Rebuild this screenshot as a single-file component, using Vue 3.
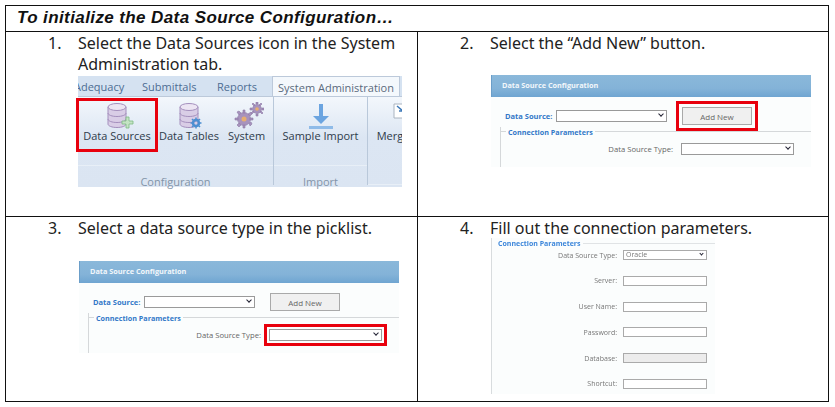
<template>
  <div class="sheet">
    <div class="title">To initialize the Data Source Configuration…</div>

    <section class="step">
      <div class="step-text"><span class="num">1.</span><span>Select the Data Sources icon in the System Administration tab.</span></div>
      <div class="ribbon">
        <div class="tabs">
          <span class="tab adequacy">Adequacy</span>
          <span class="tab submittals">Submittals</span>
          <span class="tab reports">Reports</span>
          <span class="tab active">System Administration</span>
        </div>
        <div class="ribbon-body">
          <div class="group config">
            <div class="tools">
              <div class="tool first">
                <svg width="34" height="28" viewBox="0 0 34 28">
                  <g fill="#d9cde6" stroke="#a48fbd" stroke-width="1">
                    <path d="M5 5v17c0 2 4 3.500 9 3.500s9-1.500 9-3.500V5z" />
                    <ellipse cx="14" cy="5" rx="9" ry="3.500" fill="#ece5f3" />
                    <path d="M5 11c0 2 4 3.500 9 3.500s9-1.500 9-3.500M5 17c0 2 4 3.500 9 3.500s9-1.500 9-3.500" fill="none" />
                  </g>
                  <path d="M23 15h3v4h4v3h-4v4h-3v-4h-4v-3h4z" fill="#c4e3c4" stroke="#7dba84" stroke-width=".8" />
                </svg>
                <span>Data Sources</span>
              </div>
              <div class="tool tables">
                <svg width="34" height="28" viewBox="0 0 34 28">
                  <g fill="#d9cde6" stroke="#a48fbd" stroke-width="1">
                    <path d="M5 5v17c0 2 4 3.500 9 3.500s9-1.500 9-3.500V5z" />
                    <ellipse cx="14" cy="5" rx="9" ry="3.500" fill="#ece5f3" />
                    <path d="M5 11c0 2 4 3.500 9 3.500s9-1.500 9-3.500M5 17c0 2 4 3.500 9 3.500s9-1.500 9-3.500" fill="none" />
                  </g>
                  <circle cx="21" cy="21" r="3" fill="none" stroke="#4d8fd1" stroke-width="2.500" />
                  <path d="M21 15.500v2.500M21 24v2.500M15.500 21H18M24 21h2.500M17 17l2 2M23 23l2 2M25 17l-2 2M19 23l-2 2" stroke="#4d8fd1" stroke-width="1.500" />
                </svg>
                <span>Data Tables</span>
              </div>
              <div class="tool system">
                <svg width="34" height="28" viewBox="0 0 34 28">
                  <g fill="#a793bd" stroke="#8d78a6" stroke-width=".6">
                    <circle cx="14" cy="17" r="6.500" />
                    <path d="M13 8h2v3h-2zM13 23h2v3h-2zM5 16h3v2H5zM20 16h3v2h-3zM7 10l2-1 2 2-2 2zM19 21l2-1 1 2-2 2zM21 10l1 2-2 2-2-2zM9 21l2 2-2 2-2-2z" />
                    <circle cx="27" cy="7" r="4.500" />
                    <path d="M26 0h2v2h-2zM26 12h2v2h-2zM20 6h2v2h-2zM32 6h2v2h-2zM22 2l1-1 2 2-1 1zM30 10l1-1 2 2-1 1zM31 1l1 1-2 2-1-1zM23 9l1 1-2 2-1-1z" />
                  </g>
                  <circle cx="14" cy="17" r="2.500" fill="#e6ae72" />
                  <circle cx="27" cy="7" r="1.800" fill="#e6ae72" />
                </svg>
                <span>System</span>
              </div>
            </div>
            <div class="group-label">Configuration</div>
          </div>
          <div class="group import">
            <div class="tools">
              <div class="tool">
                <svg width="34" height="28" viewBox="0 0 34 28">
                  <path d="M15 2h4v12h6l-8 8-8-8h6z" fill="#6ba4e0" />
                  <rect x="5" y="24" width="24" height="3" fill="#8fbbe8" />
                </svg>
                <span>Sample Import</span>
              </div>
            </div>
            <div class="group-label">Import</div>
          </div>
          <div class="group merge">
            <div class="tools">
              <div class="tool">
                <svg width="34" height="28" viewBox="0 0 34 28">
                  <path d="M8 2h18v14H8z" fill="#fff" stroke="#aab4c0" />
                  <path d="M11 4l6 5M17 5v4h-4" fill="none" stroke="#3c78b8" stroke-width="1.500" />
                </svg>
                <span>Merge</span>
              </div>
            </div>
          </div>
        </div>
      </div>
    </section>

    <section class="step">
      <div class="step-text"><span class="num">2.</span><span>Select the “Add New” button.</span></div>
      <div class="config-panel second">
        <div class="panel-head">Data Source Configuration</div>
        <div class="source-row">
          <label>Data Source:</label>
          <div class="fake-select source"><i class="chev"></i></div>
          <button class="add-btn marked">Add New</button>
        </div>
        <div class="params">
          <div class="params-legend"><span>Connection Parameters</span></div>
          <div class="type-row">
            <label>Data Source Type:</label>
            <div class="fake-select type"><i class="chev"></i></div>
          </div>
        </div>
      </div>
    </section>

    <section class="step">
      <div class="step-text"><span class="num">3.</span><span>Select a data source type in the picklist.</span></div>
      <div class="config-panel third">
        <div class="panel-head">Data Source Configuration</div>
        <div class="source-row">
          <label>Data Source:</label>
          <div class="fake-select source"><i class="chev"></i></div>
          <button class="add-btn">Add New</button>
        </div>
        <div class="params">
          <div class="params-legend"><span>Connection Parameters</span></div>
          <div class="type-row">
            <label>Data Source Type:</label>
            <div class="fake-select type marked"><i class="chev"></i></div>
          </div>
        </div>
      </div>
    </section>

    <section class="step">
      <div class="step-text"><span class="num">4.</span><span>Fill out the connection parameters.</span></div>
      <div class="conn-form">
        <div class="conn-legend"><span>Connection Parameters</span></div>
        <div class="conn-row first-row">
          <label>Data Source Type:</label>
          <div class="conn-select">Oracle<i class="chev small"></i></div>
        </div>
        <div v-for="field in fields" :key="field.label" class="conn-row">
          <label>{{ field.label }}:</label>
          <div class="conn-input" :class="{ disabled: field.disabled }"></div>
        </div>
      </div>
    </section>
  </div>
</template>

<script setup>
const fields = [
  { label: 'Server' },
  { label: 'User Name' },
  { label: 'Password' },
  { label: 'Database', disabled: true },
  { label: 'Shortcut' },
]
</script>

<style>
body {
  margin: 0;
  background: #fff;
}
</style>

<style scoped>
.sheet {
  box-sizing: border-box;
  width: 824px;
  height: 397px;
  margin: 5px 0 0 5px;
  display: grid;
  grid-template-columns: 412px 1fr;
  grid-template-rows: 26px 185px 1fr;
  border: 1px solid #111;
  font-family: "Open Sans", "Liberation Sans", sans-serif;
  color: #222;
}
.title {
  grid-column: 1 / 3;
  padding-left: 11px;
  border-bottom: 1px solid #111;
  font: italic 700 17px/24px "Liberation Sans", sans-serif;
  letter-spacing: .4px;
  color: #111;
}
.step {
  min-width: 0;
}
.step:nth-of-type(odd) {
  border-right: 1px solid #111;
}
.step:nth-of-type(1),
.step:nth-of-type(2) {
  border-bottom: 1px solid #111;
}
.step-text {
  display: flex;
  padding: 1px 10px 0 42px;
  font: 16px/21px "Noto Sans", sans-serif;
  color: #222;
}
.num {
  flex: 0 0 30px;
}

/* ribbon */
.ribbon {
  width: 324px;
  height: 111px;
  margin: 1px 0 0 72px;
  background: #dbe5f2;
  font-size: 11px;
}
.tabs {
  display: flex;
  height: 20px;
  line-height: 21px;
  overflow: hidden;
  border-bottom: 1px solid #bcc9da;
  color: #4d6d93;
  white-space: nowrap;
  background: #d5e2f1;
}
.tab.adequacy {
  width: 64px;
  text-indent: -4px;
}
.tab.submittals {
  width: 75px;
}
.tab.reports {
  width: 55px;
}
.tab.active {
  width: 126px;
  text-align: center;
  color: #5a6a7c;
  background: #f4f8fc;
  border: 1px solid #bcc9da;
  border-bottom: 0;
}
.ribbon-body {
  display: flex;
  height: 90px;
  background: linear-gradient(#f3f7fc, #dce6f3 45%, #dbe5f2);
}
.group {
  box-sizing: border-box;
  flex: 0 0 auto;
  display: flex;
  flex-direction: column;
  border-right: 1px solid #b9c8da;
  margin-bottom: 2px;
}
.group.config {
  width: 196px;
}
.group.import {
  width: 94px;
}
.group.merge {
  flex: 1 1 0;
  min-width: 0;
  overflow: hidden;
  border: 0;
}
.tools {
  flex: 1;
  display: flex;
  border-bottom: 1px solid #e8eff7;
}
.tool {
  display: flex;
  flex-direction: column;
  align-items: center;
  padding-top: 5px;
  color: #2f3b4a;
  white-space: nowrap;
  line-height: 16px;
}
.tool svg {
  display: block;
  height: 28px;
  margin-bottom: -2px;
}
.tool.first {
  box-sizing: border-box;
  flex: 0 0 82px;
  height: 54px;
  margin: 1px 0 0 -2px;
  border: 3px solid #e8000d;
  padding-top: 1px;
}
.tool.first svg,
.tool.tables svg {
  margin-left: 5px;
}
.tool.tables {
  margin-left: 2px;
  width: 58px;
}
.tool.system {
  margin-left: 10px;
}
.import .tool {
  width: 93px;
}
.merge .tool {
  margin-left: 8px;
}
.merge .tool svg {
  transform: translateX(10px);
}
.group-label {
  box-sizing: border-box;
  height: 19px;
  padding-top: 7px;
  line-height: 18px;
  text-align: center;
  color: #8294a8;
}

/* config panels */
.config-panel {
  width: 320px;
  height: 92px;
  background: #fbfdfd;
  overflow: hidden;
  font-size: 7.700px;
}
.config-panel.second {
  margin: 21px 0 0 73px;
}
.config-panel.third {
  margin: 22px 0 0 73px;
}
.panel-head {
  height: 22px;
  padding-left: 10px;
  font-weight: 700;
  font-size: 7.300px;
  line-height: 21px;
  color: #f2f7fb;
  background: linear-gradient(#8ab8da, #84b3d8 60%, #6fa5d1);
  border-left: 1px solid #6b9ec9;
}
.source-row {
  display: flex;
  align-items: center;
  height: 18px;
  margin-top: 10px;
  padding-left: 14px;
}
.source-row label {
  flex: 0 0 51px;
  font-weight: 700;
  font-size: 7.500px;
  white-space: nowrap;
  color: #3278c8;
}
.fake-select {
  box-sizing: border-box;
  position: relative;
  height: 12px;
  background: #fff;
  border: 1px solid #9a9a9a;
}
.fake-select.source {
  width: 111px;
}
.fake-select.type {
  width: 113px;
}
.chev {
  position: absolute;
  right: 3px;
  top: 1px;
  width: 3px;
  height: 3px;
  border: solid #223;
  border-width: 0 1.500px 1.500px 0;
  transform: rotate(45deg);
}
.add-btn {
  box-sizing: border-box;
  width: 70px;
  height: 18px;
  margin-left: 15px;
  padding: 0;
  border: 1px solid #a9a9a9;
  border-radius: 0;
  background: #f0f0f0;
  font: 8px "Open Sans", sans-serif;
  color: #666;
}
.marked {
  outline: 3px solid #e8000d;
}
.add-btn.marked {
  outline-offset: 3px;
}
.fake-select.marked {
  outline-offset: 2px;
}
.params {
  height: 40px;
  margin: 2px 0 0 9px;
  border-left: 1px solid #d5d8da;
}
.params-legend {
  display: flex;
  align-items: center;
  height: 9px;
  font-weight: 700;
  font-size: 7.200px;
  color: #3278c8;
}
.params-legend span {
  padding: 0 2px;
  margin-left: 5px;
}
.params-legend::before {
  content: "";
  width: 5px;
  margin-right: -5px;
  border-top: 1px solid #d5d8da;
}
.params-legend::after {
  content: "";
  flex: 1;
  border-top: 1px solid #d5d8da;
}
.type-row {
  display: flex;
  align-items: center;
  margin-top: 7px;
  height: 12px;
  color: #666;
}
.type-row label {
  width: 172px;
  text-align: right;
  margin-right: 8px;
}

/* step 4 form */
.conn-form {
  box-sizing: border-box;
  width: 224px;
  height: 156px;
  margin: -1px 0 0 73px;
  background: #fbfdfd;
  border-left: 1px solid #d8dcde;
  font-size: 7px;
  color: #777;
  filter: blur(.25px);
}
.conn-legend {
  display: flex;
  align-items: center;
  height: 10px;
  font-weight: 700;
  color: #3c86da;
}
.conn-legend span {
  padding: 0 2px;
  margin-left: 4px;
}
.conn-legend::after {
  content: "";
  flex: 1;
  border-top: 1px solid #e0e3e5;
}
.conn-row {
  display: flex;
  align-items: center;
  height: 10px;
  margin-top: 15.800px;
}
.conn-row.first-row {
  margin-top: 2px;
}
.conn-row label {
  width: 125px;
  text-align: right;
  margin-right: 6px;
}
.conn-select {
  box-sizing: border-box;
  position: relative;
  width: 84px;
  height: 10px;
  padding-left: 2px;
  line-height: 8px;
  background: #fff;
  border: 1px solid #aaa;
}
.chev.small {
  top: 1px;
  width: 2px;
  height: 2px;
  border-width: 0 1px 1px 0;
}
.conn-input {
  box-sizing: border-box;
  width: 84px;
  height: 10px;
  background: #fff;
  border: 1px solid #aaa;
}
.conn-input.disabled {
  background: #ececec;
}
</style>
